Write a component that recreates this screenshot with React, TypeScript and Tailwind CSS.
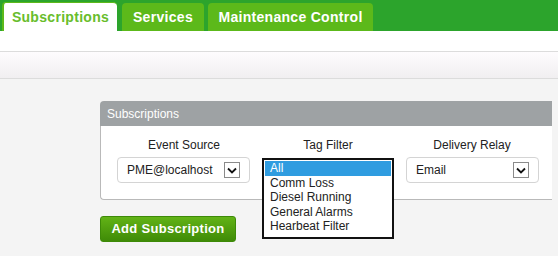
import { useState } from "react";

const tabs = [
  { label: "Subscriptions", width: "w-[115px]" },
  { label: "Services", width: "w-[82px]" },
  { label: "Maintenance Control", width: "w-[165px]" },
];
const tagOptions = ["All", "Comm Loss", "Diesel Running", "General Alarms", "Hearbeat Filter"];

function Arrow() {
  return (
    <span className="flex items-center justify-center w-[16px] h-[16px] border border-[#8a8a8a] bg-white">
      <svg width="10" height="7" viewBox="0 0 10 7">
        <path d="M1 1.5 L5 5.5 L9 1.5" fill="none" stroke="#111" strokeWidth="1.8" />
      </svg>
    </span>
  );
}

function FakeSelect({ value }: { value: string }) {
  return (
    <div className="flex items-center justify-between w-[133px] h-[26px] bg-white border border-[#d4d4d4] rounded-[4px] pl-[9px] pr-[9px] text-[12px] text-[#222]">
      <span>{value}</span>
      <Arrow />
    </div>
  );
}

export default function App() {
  const [active] = useState(0);
  const [tag, setTag] = useState("All");

  return (
    <div className="w-[558px] h-[256px] overflow-hidden bg-[#f4f4f4] font-['Liberation_Sans',Arial,sans-serif]">
      {/* Tabs */}
      <div className="h-[31px] bg-[#2ca42c] flex items-end gap-[4px] pl-[2px]">
        {tabs.map((t, i) => (
          <div
            key={t.label}
            className={`flex items-center justify-center rounded-t-[4px] text-[14px] font-bold tracking-[0.3px] ${t.width} ${
              i === active
                ? "bg-white text-[#68bd2c] border-l-2 border-t border-[#5cb91a] h-[29px] mr-[1px]"
                : "bg-[#5cb91a] text-white h-[28px]"
            }`}
          >
            {t.label}
          </div>
        ))}
      </div>
      <div className="h-[20px] bg-white" />
      <div className="h-[28px] border-y border-[#dcdcdc] bg-gradient-to-b from-[#fefcfe] to-[#f1eff1]" />

      {/* Content */}
      <div className="pl-[100px] pt-[22px]">
        <div className="w-[452px]">
          <div className="h-[25px] bg-[#9ea2a4] rounded-tl-[4px] flex items-center pl-[7px] text-[12px] text-white">
            Subscriptions
          </div>
          <div className="h-[74px] bg-white border-l border-b border-[#b9b9b9] rounded-bl-[4px] pl-[11px] pt-[12px] grid grid-cols-[144px_144px_144px]">
            <div className="flex flex-col">
              <div className="text-center text-[12px] text-[#222] leading-[14px]">Event Source</div>
              <div className="pl-[5px] mt-[5px]">
                <FakeSelect value="PME@localhost" />
              </div>
            </div>
            <div className="flex flex-col">
              <div className="text-center text-[12px] text-[#222] leading-[14px]">Tag Filter</div>
              <div className="pl-[6px] mt-[5px] relative h-[26px]">
                <div className="absolute left-[6px] top-[1px] w-[132px] h-[81px] bg-white border-2 border-[#111] pt-[1px] px-[1px] text-[12px] leading-[14.6px] text-[#222]">
                  {tagOptions.map((o) => (
                    <div
                      key={o}
                      onClick={() => setTag(o)}
                      className={`pl-[5px] ${o === tag ? "bg-[#2f9ce0] text-white" : ""}`}
                    >
                      {o}
                    </div>
                  ))}
                </div>
              </div>
            </div>
            <div className="flex flex-col">
              <div className="text-center text-[12px] text-[#222] leading-[14px]">Delivery Relay</div>
              <div className="pl-[6px] mt-[5px]">
                <FakeSelect value="Email" />
              </div>
            </div>
          </div>
        </div>
        <button className="mt-[16px] w-[136px] h-[26px] rounded-[3px] bg-gradient-to-b from-[#62b316] to-[#3f8b07] border border-[#3d8a08] text-white text-[13px] font-bold tracking-[0.3px]">
          Add Subscription
        </button>
      </div>
    </div>
  );
}
